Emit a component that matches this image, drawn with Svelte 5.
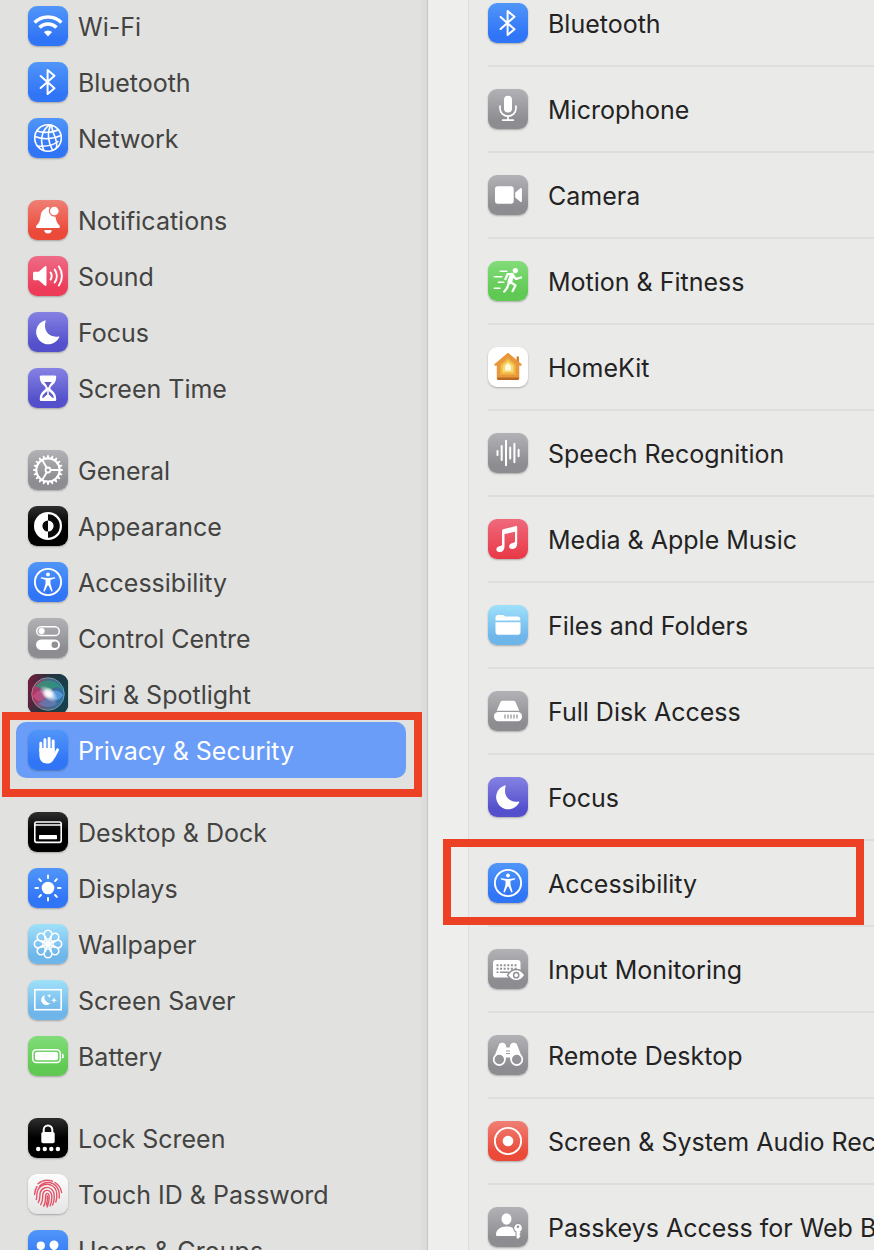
<script>
  const groups = [
    [
      { name: 'Wi-Fi', icon: 'wifi', tint: 'blue' },
      { name: 'Bluetooth', icon: 'bluetooth', tint: 'blue' },
      { name: 'Network', icon: 'globe', tint: 'blue' }
    ],
    [
      { name: 'Notifications', icon: 'bell', tint: 'red' },
      { name: 'Sound', icon: 'speaker', tint: 'pink' },
      { name: 'Focus', icon: 'moon', tint: 'indigo' },
      { name: 'Screen Time', icon: 'hourglass', tint: 'indigo' }
    ],
    [
      { name: 'General', icon: 'gear', tint: 'gray' },
      { name: 'Appearance', icon: 'contrast', tint: 'black' },
      { name: 'Accessibility', icon: 'person', tint: 'blue' },
      { name: 'Control Centre', icon: 'toggles', tint: 'gray' },
      { name: 'Siri & Spotlight', icon: 'siri', tint: 'black' },
      { name: 'Privacy & Security', icon: 'hand', tint: 'blue' }
    ],
    [
      { name: 'Desktop & Dock', icon: 'dock', tint: 'black' },
      { name: 'Displays', icon: 'sun', tint: 'blue' },
      { name: 'Wallpaper', icon: 'flower', tint: 'sky' },
      { name: 'Screen Saver', icon: 'saver', tint: 'sky' },
      { name: 'Battery', icon: 'battery', tint: 'green' }
    ],
    [
      { name: 'Lock Screen', icon: 'lock', tint: 'black' },
      { name: 'Touch ID & Password', icon: 'fingerprint', tint: 'silver' },
      { name: 'Users & Groups', icon: 'users', tint: 'blue' }
    ]
  ];

  const permissions = [
    { name: 'Bluetooth', icon: 'bluetooth', tint: 'blue' },
    { name: 'Microphone', icon: 'mic', tint: 'gray' },
    { name: 'Camera', icon: 'camera', tint: 'gray' },
    { name: 'Motion & Fitness', icon: 'runner', tint: 'green' },
    { name: 'HomeKit', icon: 'home', tint: 'white' },
    { name: 'Speech Recognition', icon: 'wave', tint: 'gray' },
    { name: 'Media & Apple Music', icon: 'music', tint: 'media' },
    { name: 'Files and Folders', icon: 'folder', tint: 'sky' },
    { name: 'Full Disk Access', icon: 'disk', tint: 'gray' },
    { name: 'Focus', icon: 'moon', tint: 'indigo' },
    { name: 'Accessibility', icon: 'person', tint: 'blue' },
    { name: 'Input Monitoring', icon: 'keyboard', tint: 'gray' },
    { name: 'Remote Desktop', icon: 'binoculars', tint: 'gray' },
    { name: 'Screen & System Audio Recording', icon: 'record', tint: 'red' },
    { name: 'Passkeys Access for Web Browsers', icon: 'passkey', tint: 'gray' }
  ];

  let selected = 'Privacy & Security';
  let highlighted = 'Accessibility';

  const line = 'fill="none" stroke="#fff" stroke-linecap="round" stroke-linejoin="round"';

  // repeats a shape around the middle of the 40x40 tile
  function spin(count, shape) {
    return Array.from({ length: count }, (_, i) =>
      `<g transform="rotate(${(i * 360) / count} 20 20)">${shape}</g>`
    ).join('');
  }

  const icons = {
    wifi: `
      <path d="M6.6 16.6a19 19 0 0 1 26.8 0M11.5 21.4a12.2 12.2 0 0 1 17 0" fill="none" stroke="#fff" stroke-width="3.500"/>
      <path d="M20 30.4l-4.2-4.3a6 6 0 0 1 8.4 0z"/>`,
    bluetooth: `<path d="M12.6 14l13.9 12.3-6.9 5.7V8l6.9 5.7L12.6 26" ${line} stroke-width="2"/>`,
    globe: `
      <g ${line} stroke-width="1.600">
        <circle cx="20" cy="20" r="13.3"/>
        <path d="M21.500 7C13.500 12 11.500 23 16 32.500M23 7c-4.500 8-2.500 18 1.500 25M24 7.500c-1 7 6 12 4.500 22"/>
        <path d="M9 13c5 2 16 2 21.500-1.500M7 18.500c8 3.500 19 2.500 26-1M9.500 28c6 .5 15 0 20.500-4.500"/>
      </g>`,
    bell: `
      <path d="M17.500 8.600a2.600 2.600 0 0 1 4.300-.8 5.900 5.900 0 0 0 5.700 9c.8 5.200 2 6.800 4 8.700.8 1 .5 2.500-1 2.500h-21c-1.500 0-2-1.500-1-2.500 3-2.900 3.500-5 4-9 .4-3.900 2-6.700 5-7.900z"/>
      <circle cx="26.300" cy="11" r="4.300"/>
      <path d="M16.300 30h7.400a3.700 3.400 0 0 1-7.400 0z"/>`,
    speaker: `
      <path d="M6.500 15.700h4.200l6-5.200c.8-.7 1.800-.4 1.800.7v17.600c0 1.100-1 1.500-1.800.7l-6-5.200H6.500c-1 0-1.500-.6-1.500-1.500v-5.600c0-.9.5-1.500 1.500-1.500z"/>
      <path d="M22.600 16.500a6.500 6.500 0 0 1 0 7M26.700 13.600a11 11 0 0 1 0 12.800M30.900 10.500a16.500 16.500 0 0 1 0 19" ${line} stroke-width="2"/>`,
    moon: `<path d="M16.700 8.400c.8-.4 1.100 0 .9.800-2.700 9.400 3.300 16.800 12.700 15.300.9-.1 1.300.3.900 1.100A12.200 12.200 0 1 1 16.700 8.400z"/>`,
    hourglass: `
      <path d="M13 7.500h14c1 0 1.400.8 1.200 1.600-.1 5.400-2.700 7.200-5.300 9.600-.8.800-.8 1.800 0 2.600 2.600 2.400 5.200 4.200 5.300 9.600.2.800-.2 2.100-1.200 2.100H13c-1 0-1.400-1.300-1.200-2.100.1-5.400 2.700-7.200 5.300-9.600.8-.8.8-1.800 0-2.600-2.600-2.400-5.200-4.200-5.300-9.600-.2-.8.200-1.600 1.200-1.600z"/>
      <path d="M16.200 14h7.600c-.9 1.600-2.700 2.600-3.100 5.300h-1.400c-.4-2.700-2.200-3.700-3.100-5.300zM20 21.600c.7 3 6.200 4.200 5.700 8.300H14.300c-.5-4.100 5-5.300 5.700-8.300z" fill="#5f5bcf"/>
      <path d="M19.200 21h1.600v5.500l4 3.500h-9.600l4-3.500z"/>`,
    gear: `
      <g fill="none" stroke="#fff">
        <circle cx="20" cy="20" r="11.700" stroke-width="2.200"/>
        <circle cx="20" cy="20" r="2.500" stroke-width="1.800"/>
        ${spin(20, '<path d="M20 8V6" stroke-width="2" stroke-linecap="round"/>')}
        ${spin(3, '<path d="M22.500 20h9" stroke-width="1.900"/>')}
      </g>`,
    contrast: `
      <circle cx="20" cy="20" r="14"/>
      <path d="M20 8.200a11.800 11.800 0 0 1 0 23.600v-6.200a5.600 5.600 0 0 0 0-11.200z" fill="#0a0a0a"/>
      <path d="M20 14.400a5.600 5.600 0 0 0 0 11.200z" fill="#0a0a0a"/>`,
    person: `
      <circle cx="20" cy="20" r="13.100" fill="none" stroke="#fff" stroke-width="1.900"/>
      <circle cx="20" cy="12.500" r="1.900"/>
      <path d="M13.500 15.300c4 .9 9 .9 13 0 .9-.2 1.200 1 .3 1.200l-4.300 1.200v4l2 6.700c.3 1-1 1.400-1.400.5L20.500 23.500h-1l-2.600 5.400c-.4.900-1.700.5-1.400-.5l2-6.700v-4l-4.300-1.200c-.9-.2-.6-1.400.3-1.200z"/>`,
    toggles: `
      <rect x="8.700" y="8.700" width="22.600" height="8.900" rx="4.450" fill="none" stroke="#fff" stroke-width="1.500"/>
      <circle cx="13.600" cy="13.100" r="3.100"/>
      <rect x="8" y="21.600" width="24" height="10.300" rx="5.150"/>
      <circle cx="26.800" cy="26.700" r="3.300" fill="#8f8f94"/>`,
    siri: `
      <defs>
        <linearGradient id="siri-back" x1="0" x2="1" y2=".25"><stop offset="0" stop-color="#7d1a3e"/><stop offset=".5" stop-color="#27323e"/><stop offset="1" stop-color="#153f4c"/></linearGradient>
        <linearGradient id="siri-orb" x1="0" x2="1"><stop offset="0" stop-color="#e02d62"/><stop offset=".42" stop-color="#64698e"/><stop offset="1" stop-color="#2f86c4"/></linearGradient>
        <radialGradient id="siri-glow"><stop offset="0" stop-color="#fff"/><stop offset=".35" stop-color="#fff" stop-opacity=".75"/><stop offset="1" stop-color="#fff" stop-opacity="0"/></radialGradient>
      </defs>
      <rect width="40" height="40" rx="9" fill="url(#siri-back)"/>
      <circle cx="20" cy="20" r="16.300" fill="url(#siri-orb)" opacity=".8"/>
      <path d="M7 13a16 16 0 0 1 27 2c-7-4-10 0-14 4-4-4-7-6-13-6z" fill="#2f9a78" opacity=".75"/>
      <path d="M5 22c5-8 11-6 15-1 5-5 10-6 15 0-5 7-11 5-15 0-4 7-10 9-15 1z" fill="#e05596" opacity=".5"/>
      <path d="M20 21c5-6 10-6 15 0-3 6-10 7-15 0z" fill="#4a9fe8" opacity=".85"/>
      <path d="M14 27c7-5 12-2 15 3a16 16 0 0 1-19 0z" fill="#6f83c4" opacity=".6"/>
      <circle cx="20" cy="20" r="16.300" fill="none" stroke="#8fc0b2" stroke-width=".9" opacity=".7"/>
      <ellipse cx="20.500" cy="19.500" rx="11" ry="6" fill="url(#siri-glow)" transform="rotate(40 20 20)"/>
      <circle cx="20.500" cy="19.500" r="6" fill="url(#siri-glow)"/>`,
    hand: `
      <g ${line} stroke-width="2.900">
        <path d="M12.800 21v-7.700M16.900 20V9.700M21.100 20V8.500M25.200 21V11"/>
        <path d="M29.500 19.800l-3.600 7"/>
      </g>
      <path d="M11.350 18h15.300v5l2.200-1.500-2.400 6.500c-1.500 3.800-3.700 5.500-7.200 5.500-5 0-7.900-3.500-7.900-8.500z"/>`,
    dock: `
      <rect x="6.800" y="10" width="26.400" height="20.400" rx="1.800" fill="none" stroke="#fff" stroke-width="1.600"/>
      <path d="M7 12.900h26" stroke="#fff" stroke-width="1.500"/>
      <rect x="11" y="22.900" width="18" height="4.300" rx=".6"/>`,
    sun: `
      <circle cx="20" cy="20" r="6.300"/>
      ${spin(8, `<path d="M20 10V7.500" ${line} stroke-width="2"/>`)}`,
    flower: `
      <g fill="none" stroke="#fff" stroke-width="1.500">
        ${spin(8, '<path d="M20 20l-2.200-6.600a3.900 3.900 0 1 1 4.400 0z"/>')}
        <circle cx="20" cy="20" r="5"/>
      </g>`,
    saver: `
      <rect x="6.800" y="9.700" width="26.400" height="20" fill="none" stroke="#fff" stroke-width="1.600"/>
      <path d="M16.800 15a5.800 5.800 0 0 0 5.800 8 5.200 5.200 0 1 1-5.800-8z"/>
      <path d="M21.200 13.500l.6 1.700 1.700.6-1.700.6-.6 1.700-.6-1.700-1.700-.6 1.700-.6zM26 17.200l.8 2.200 2.200.8-2.200.8-.8 2.200-.8-2.200-2.200-.8 2.200-.8z"/>`,
    battery: `
      <rect x="4.700" y="13.700" width="27.600" height="12.800" rx="3.700" fill="none" stroke="#fff" stroke-width="1.500"/>
      <rect x="7" y="16" width="23" height="8.200" rx="1.800"/>
      <path d="M34 17.500c2.600.8 2.600 4.400 0 5.200z"/>`,
    lock: `
      <rect x="13.300" y="14" width="13.400" height="11.300" rx="1.800"/>
      <path d="M15.700 15v-3.200a4.300 4.300 0 0 1 8.600 0V15" fill="none" stroke="#fff" stroke-width="2"/>
      <circle cx="10.200" cy="31" r="2.200"/><circle cx="16.800" cy="31" r="2.200"/><circle cx="23.300" cy="31" r="2.200"/><circle cx="29.900" cy="31" r="2.200"/>`,
    fingerprint: `
      <g fill="none" stroke="#e25568" stroke-width="1.400" stroke-linecap="round">
        <path d="M10 9.700a15 15 0 0 1 14.500-2.500M26.800 8.500c3.800 2 6 5.500 6.800 10"/>
        <path d="M6.600 20.500c.2-3 .8-5.600 2.400-8M11.500 12.200c5-5.200 13-4.800 17 .3 2.800 3.500 3.200 7 2.700 11.500"/>
        <path d="M8.200 25.500c1.200-3 .2-5.500 1.300-8.500 2-6.500 10-8.500 15.200-5 3.500 2.500 4.400 6.500 4.100 11-.1 2-.5 3.500-1 5"/>
        <path d="M10.300 28.500c2.400-4 1-7 2-10.200 1.600-4.800 7.200-6.300 11-3.300 2.900 2.300 3.200 6 2.900 9.500-.2 2.500-.8 4.500-1.600 6.500"/>
        <path d="M12.800 30.700c3-4.700 1.300-8 2.200-11.200 1.200-3.800 6-4.200 8-.7 1.400 2.500.9 7.700-.8 13"/>
        <path d="M15.700 32.200c2.800-5 1.500-8.500 2-11.200.6-2.300 3-2 3.300.2.400 3-.2 7.800-1.800 11.800M19.400 22c.4 3-.1 6-1 9"/>
      </g>`,
    users: `
      <circle cx="12.800" cy="15.700" r="4.100"/><circle cx="26" cy="15" r="4.500"/>
      <path d="M4.500 28c0-4.500 3.500-7 8.300-7 2 0 3.800.5 5 1.400-1.600 1.500-2.400 3.400-2.400 5.600zM17 29c0-5 3.800-8 9-8s9 3 9 8z"/>
      <path d="M11.500 18h2.600v4h-2.600zM24.500 18h3v4h-3z"/>`,
    mic: `
      <rect x="16" y="6.700" width="8" height="16.800" rx="4"/>
      <path d="M12 17v2.200a8 8 0 0 0 16 0V17M20 27.500V31M14.700 31.200h10.600" ${line} stroke-width="1.700"/>`,
    camera: `
      <rect x="7" y="11.300" width="18.700" height="17.500" rx="2.700"/>
      <path d="M27.200 17.500l5.200-4.200c.8-.6 1.500-.3 1.500.6v12.200c0 .9-.7 1.200-1.500.6l-5.200-4.200z"/>`,
    runner: `
      <circle cx="27.300" cy="9.600" r="2.600"/>
      <path d="M24 14.200l-2.200 6.600" ${line} stroke-width="4.600"/>
      <path d="M24 13l-4.500.2-2.200 5M25 14.500l3 3.500 5-1.500M22.500 21l5 3.500-3 5.700M20.500 23l-1.500 4-2.800 3.600" ${line} stroke-width="2.200"/>
      <path d="M12.300 10.300h6.500M6.300 15.700h7.500M10.500 21.300h5.300M6.300 27.200h5.700" ${line} stroke-width="1.600"/>`,
    home: `
      <path d="M28.500 9.500h2.500v7h-2.500z" fill="#d5802d"/>
      <path d="M19.300 6.300c.5-.5 1-.5 1.500 0L34 17.500l-1 1.300h-1.700v12.500c0 .9-.5 1.500-1.500 1.500H10.300c-1 0-1.500-.6-1.500-1.500V18.800H7l-1-1.300z" fill="#e9973d"/>
      <path d="M9 30.500h22v1c0 .9-.4 1.400-1.300 1.400H10.300c-.9 0-1.300-.5-1.300-1.400z" fill="#b9691f"/>
      <path d="M20 10.500l8 6.900V28H12V17.400z" fill="#efad3e"/>
      <path d="M20 12.500l6.500 5.500v8.500h-13V18z" fill="#f3c450"/>
      <path d="M20 14.200l5 4.500V25H15v-6.300z" fill="#f8dc73"/>
      <path d="M20 16.200l2.900 2.900V23.500h-5.800v-4.400z" fill="#fffbe2"/>`,
    wave: `<path d="M9.500 18v4M13.700 13v14M18 7.800v24.400M22.200 14.500v11M26.400 10.800v18.400M30.600 16.800v6.400" ${line} stroke-width="2"/>`,
    music: `
      <path d="M14 12.500c0-1.500.6-2.200 2-2.500l11.300-2.800c1.200-.3 1.900.2 1.900 1.300v15.800c0 3.200-1.400 5.500-4.700 5.800-2.200.2-3.400-1-3.300-2.700.2-3 3.300-3.300 4.800-3.800.8-.3 1-.7 1-1.500v-9.300l-10.500 2.300v12.300c0 3.300-1.700 5.400-4.700 5.700-2.300.2-3.600-1-3.400-2.900.3-2.800 3.200-3 4.700-3.500.7-.3.900-.8.900-1.500z"/>`,
    folder: `
      <path d="M7.500 15.500v-2.700c0-1.800 1-2.800 2.800-2.800h4.200c1 0 1.500.3 2.200.9l.8.700h11.800c1.900 0 3 1 3 2.800v1.100z"/>
      <path d="M7.500 17.200h25v9.800c0 1.900-1 2.800-2.900 2.800H10.400c-1.900 0-2.900-.9-2.900-2.800z"/>`,
    disk: `
      <path d="M12.200 11.800c.5-1.400 1.300-2 2.700-2h10.200c1.400 0 2.200.6 2.700 2l3.500 8H8.700z"/>
      <rect x="6" y="21" width="28" height="9.200" rx="4.200"/>
      <path d="M17 23.500v4M20 23.500v4M23 23.500v4M26 23.500v4M29 23.500v4" stroke="#8f8f94" stroke-width="1.200"/>`,
    keyboard: `
      <rect x="5" y="11" width="27.500" height="17.500" rx="2.800"/>
      <path d="M8.500 16.300h21M8.500 19.700h21" stroke="#929297" stroke-width="2" stroke-dasharray="2 1.600"/>
      <path d="M8.500 23.200h2M12 23.200h9" stroke="#929297" stroke-width="1.600"/>
      <path d="M19.500 26.200c5-7.500 12.500-7.500 17.500 0-5 7.500-12.500 7.500-17.500 0z" stroke="#909095" stroke-width="1.500"/>
      <circle cx="28.200" cy="26.200" r="2.600" fill="none" stroke="#8f8f94" stroke-width="1.500"/>`,
    binoculars: `
      <path d="M11 9.500c1-2.300 5.500-2.300 6.600 0l.8 3h3.200l.8-3c1.100-2.300 5.600-2.300 6.600 0l5.700 14.700L28 23l-6 1.500v-2h-4v2L12 23l-6.700 1.200z"/>
      <circle cx="11.300" cy="24.500" r="5.600" fill="#939398" stroke="#fff" stroke-width="1.700"/>
      <circle cx="28.700" cy="24.500" r="5.600" fill="#939398" stroke="#fff" stroke-width="1.700"/>
      <path d="M18 16h4M18 18.500h4" stroke="#9c9ca0" stroke-width="1"/>`,
    record: `
      <circle cx="20" cy="20" r="13.100" fill="none" stroke="#fff" stroke-width="1.900"/>
      <circle cx="20" cy="20" r="5.300"/>`,
    passkey: `
      <ellipse cx="18.500" cy="12" rx="5" ry="5.700"/>
      <path d="M8 27.500c0-5 4.500-8 10.500-8 2.600 0 5 .6 6.800 1.700.3 1.700 1 2.800 2.200 3.700V29H9.500C8.500 29 8 28.500 8 27.500z"/>
      <circle cx="30" cy="21" r="4.900" fill="#96969b"/>
      <path d="M30 17a4 4 0 0 1 1.600 7.600l1 1.500-1.300 1.400 1.300 1.400-2.600 3-1.500-1.500v-5.800A4 4 0 0 1 30 17z"/>
      <circle cx="30" cy="19.800" r="1.200" fill="#909095"/>`
  };
</script>

<div class="window">
  <nav class="sidebar" aria-label="Settings">
    {#each groups as group}
      <ul class="group">
        {#each group as item}
          <li>
            <a href="#settings" class:selected={item.name === selected}>
              <svg class="tile {item.tint}" viewBox="0 0 40 40" aria-hidden="true">{@html icons[item.icon]}</svg>
              <span>{item.name}</span>
            </a>
          </li>
        {/each}
      </ul>
    {/each}
  </nav>

  <main>
    <ul class="card">
      {#each permissions as item}
        <li class:marked={item.name === highlighted}>
          <button type="button">
            <svg class="tile {item.tint}" viewBox="0 0 40 40" aria-hidden="true">{@html icons[item.icon]}</svg>
            <span>{item.name}</span>
          </button>
        </li>
      {/each}
    </ul>
  </main>
</div>

<style>
  :global(body) {
    margin: 0;
    background: #eeeeec;
    font-family: Inter, 'Liberation Sans', sans-serif;
    font-size: 25px;
    line-height: 32px;
  }

  .window {
    display: flex;
    height: 100vh;
    overflow: hidden;
  }

  ul {
    list-style: none;
    margin: 0;
    padding: 0;
  }

  /* both columns are scrolled part of the way through a row */
  .sidebar {
    flex: 0 0 428px;
    box-sizing: border-box;
    margin-top: -2px;
    padding: 0 21px 0 16px;
    border-right: 1px solid #c6c6c4;
    background: linear-gradient(to left, #d9d9d7, #e1e1df 8px);
  }

  .group + .group {
    margin-top: 26px;
  }

  a {
    position: relative;
    display: flex;
    align-items: center;
    gap: 10px;
    height: 56px;
    padding: 0 12px;
    border-radius: 10px;
    color: #434342;
    text-decoration: none;
    white-space: nowrap;
  }

  a.selected {
    background: #6a9df8;
    color: #fff;
  }

  a.selected::after,
  .marked::after {
    content: '';
    position: absolute;
    border: 8px solid #ec4125;
    pointer-events: none;
  }

  a.selected::after {
    inset: -10px -16px -19px -14px;
  }

  main {
    flex: 1;
    min-width: 0;
    margin-top: -19px;
    padding-left: 40px;
  }

  .card {
    padding-left: 19px;
    border-left: 1px solid #dededc;
    background: #eaeae9;
  }

  .card li {
    position: relative;
    border-bottom: 2px solid #dededd;
  }

  .marked::after {
    inset: -2px 10px 0 -45px;
  }

  button {
    display: flex;
    align-items: center;
    gap: 20px;
    width: 100%;
    height: 84px;
    padding: 0;
    border: 0;
    background: none;
    color: #232323;
    font: inherit;
    text-align: left;
    white-space: nowrap;
  }

  span {
    padding-top: 2px;
  }

  .tile {
    flex: none;
    width: 40px;
    height: 40px;
    border-radius: 9px;
    box-shadow: 0 1px 2px rgba(0, 0, 0, 0.28);
    fill: #fff;
  }

  .blue { background: linear-gradient(#5096f8, #3175f7 80%); }
  .red { background: linear-gradient(#ef7f74, #eb4a39 80%); }
  .pink { background: linear-gradient(#ee6c87, #ec3c59 80%); }
  .indigo { background: linear-gradient(#8582e3, #5450cc 80%); }
  .gray { background: linear-gradient(#b2b2b6, #8c8c91 80%); }
  .black { background: linear-gradient(#2e2e2e, #000 50%); }
  .sky { background: linear-gradient(#9fe0fa, #6eb5ea 80%); }
  .green { background: linear-gradient(#82dc79, #60c953 80%); }
  .silver { background: linear-gradient(#fdfdfd, #e4e4e4); }
  .white { background: #fff; }
  .media { background: linear-gradient(#ef6a7c, #e83746); }
</style>
